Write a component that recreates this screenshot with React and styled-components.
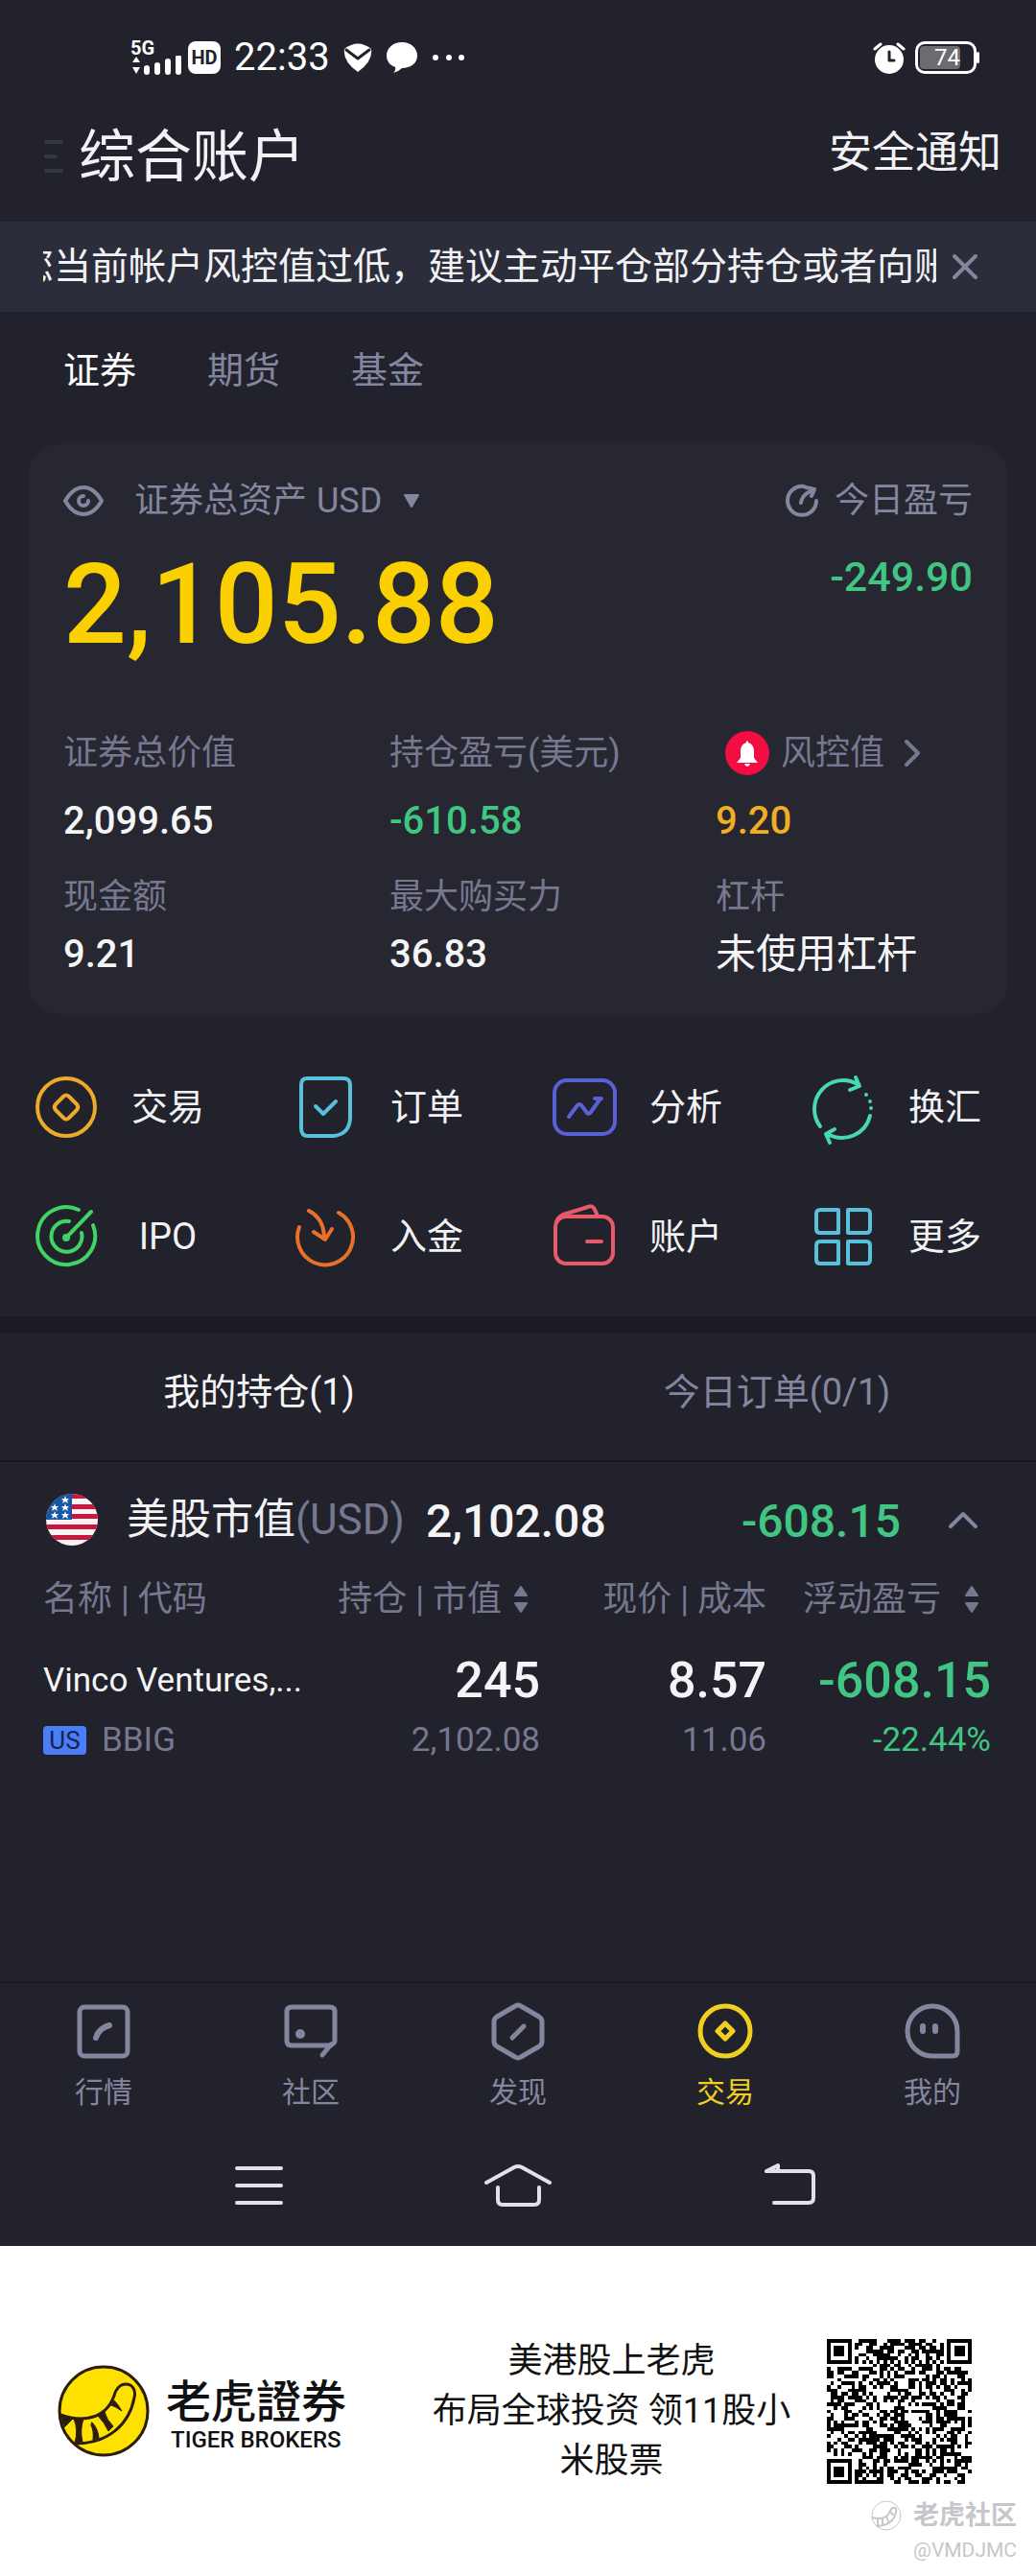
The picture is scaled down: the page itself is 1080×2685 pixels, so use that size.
import styled, { createGlobalStyle } from "styled-components";

const GlobalStyle = createGlobalStyle`
  * {
    box-sizing: border-box;
  }

  body {
    margin: 0;
    background: #ffffff;
    font-family: Roboto, "Noto Sans CJK SC", sans-serif;
  }

  button {
    padding: 0;
    border: 0;
    background: none;
    color: inherit;
    font: inherit;
    cursor: pointer;
  }

  a {
    color: inherit;
    text-decoration: none;
  }

  svg {
    display: block;
    flex: none;
    fill: none;
    stroke: currentColor;
    stroke-width: 4;
    stroke-linecap: round;
    stroke-linejoin: round;
  }
`;

const metrics = [
  { label: "证券总价值", value: "2,099.65" },
  { label: "持仓盈亏(美元)", value: "-610.58", color: "#41c583" },
  { label: "风控值", value: "9.20", color: "#f0ae24", alert: true },
  { label: "现金额", value: "9.21" },
  { label: "最大购买力", value: "36.83" },
  { label: "杠杆", value: "未使用杠杆", text: true },
];

const actions = [
  {
    name: "交易",
    color: "#eeab2a",
    icon: (
      <>
        <circle cx="32" cy="32" r="30" />
        <path d="M29.5 20.5 Q32 18.5 34.5 20.5 L43 29 Q45.5 32 43 35 L34.5 43.5 Q32 45.5 29.5 43.5 L21 35 Q18.5 32 21 29 Z" />
      </>
    ),
  },
  {
    name: "订单",
    color: "#57c0da",
    icon: (
      <>
        <path d="M13 2 H51 Q58 2 58 9 V44 Q57 60 41 62 H14 Q7 62 7 54 V9 Q7 2 13 2 Z" />
        <path d="M22 31 L30 39 L43 26" />
      </>
    ),
  },
  {
    name: "分析",
    color: "#5a61d8",
    icon: (
      <>
        <rect x="1" y="4" width="63" height="56" rx="13" />
        <path d="M16 42 L25 30 Q27 28 29 30 L35 38 Q37 40 39 37 L49 23 M43 23 H50" />
      </>
    ),
  },
  {
    name: "换汇",
    color: "#46d9ae",
    icon: (
      <>
        <path d="M8 52 A30 30 0 0 1 47 8 M45 1 L49 10 L39 14" />
        <path d="M60 41 A30 30 0 0 1 16 60 M23 55 L14 60 L18 69" />
        <path d="M56 19 v0.1 M60 26 v0.1 M61 33 v0.1" />
      </>
    ),
  },
  {
    name: "IPO",
    color: "#42d365",
    icon: (
      <>
        <path d="M45 4 A30 30 0 1 0 60 20" />
        <path d="M35 16 A16 16 0 1 0 48 28" />
        <path d="M32 33 L58 6" />
        <circle cx="32" cy="33" r="2" />
      </>
    ),
  },
  {
    name: "入金",
    color: "#e96f2a",
    icon: (
      <>
        <path d="M46 7 A29 29 0 1 1 5 22" />
        <path d="M15 5 Q31 13 31 34 M20 27 L32 35 L39 24" />
      </>
    ),
  },
  {
    name: "账户",
    color: "#e65a69",
    icon: (
      <>
        <rect x="2" y="11" width="60" height="49" rx="11" />
        <path d="M3 17 Q4 12 10 9 L36 1 Q40 -1 42 2 L46 10" />
        <path d="M35 37 H50" />
      </>
    ),
  },
  {
    name: "更多",
    color: "#57c0da",
    icon: (
      <>
        <path d="M8 4 H27 V28 H8 Q4 28 4 24 V8 Q4 4 8 4 Z" />
        <path d="M37 4 H56 Q60 4 60 8 V24 Q60 28 56 28 H37 Z" />
        <path d="M8 37 H27 V60 H8 Q4 60 4 56 V41 Q4 37 8 37 Z" />
        <path d="M37 37 H56 Q60 37 60 41 V56 Q60 60 56 60 H37 Z" />
      </>
    ),
  },
];

const menus = [
  {
    name: "行情",
    icon: (
      <>
        <rect x="3" y="3" width="50" height="51" rx="5" />
        <path d="M20 35 Q23 25 34 22" strokeWidth="6" />
      </>
    ),
  },
  {
    name: "社区",
    icon: (
      <>
        <path d="M40 53 L49 42 Q53 41 53 38 V8 Q53 3 48 3 H8 Q3 3 3 8 V38 Q3 43 8 43 H49" />
        <circle cx="17" cy="31" r="5" fill="currentColor" stroke="none" />
      </>
    ),
  },
  {
    name: "发现",
    icon: (
      <>
        <path d="M25 2 Q28 0 31 2 L50 13 Q53 15 53 18 V39 Q53 42 50 44 L31 55 Q28 57 25 55 L6 44 Q3 42 3 39 V18 Q3 15 6 13 Z" />
        <path d="M22 35 L34 23" />
      </>
    ),
  },
  {
    name: "交易",
    active: true,
    icon: (
      <>
        <circle cx="28" cy="28" r="26" />
        <path d="M28 20 L36 28 L28 36 L20 28 Z" />
      </>
    ),
  },
  {
    name: "我的",
    icon: (
      <>
        <path d="M28 2 A26 26 0 0 0 28 54 H49 Q54 54 54 49 V28 A26 26 0 0 0 28 2 Z" />
        <path d="M18 23 V28 M31 23 V28" strokeWidth="6" />
      </>
    ),
  },
];

const QR_SIZE = 41;

const isFinder = (x, y) =>
  (x < 8 && y < 8) || (x > 32 && y < 8) || (x < 8 && y > 32);

const makeQrPath = () => {
  let seed = 74;
  let path = "";
  for (let y = 0; y < QR_SIZE; y++) {
    for (let x = 0; x < QR_SIZE; x++) {
      seed = (seed * 16807) % 2147483647;
      const ring = Math.max(Math.abs(x - 34), Math.abs(y - 34));
      let on = seed % 100 < 50;
      if (x === 6 || y === 6) on = (x + y) % 2 === 0;
      if (ring < 3) on = ring !== 1;
      if (on && !isFinder(x, y)) path += `M${x} ${y}h1v1h-1z`;
    }
  }
  return path;
};

const qrPath = makeQrPath();

const TigerLogo = () => (
  <svg width="96" height="96" viewBox="0 0 96 96" role="img" aria-label="老虎證券">
    <circle cx="48" cy="48" r="46" fill="#ffe100" stroke="#2b1d0e" strokeWidth="3" />
    <g stroke="#2b1d0e" strokeWidth="3">
      <path d="M3 52 C28 61 51 55 59 32 C61 24 66 20 71 20 C78 20 82 26 80 34 C75 61 54 82 18 82" />
      <g fill="#2b1d0e" strokeWidth="1">
        <path d="M3 51 L16 56 L7 65 Z" />
        <path d="M17 56 H27 Q23 68 26 80 L18 81 Q22 68 17 56 Z" />
        <path d="M36 60 Q42 66 43 76 L37 78 Q38 68 35 63 Z" />
        <path d="M42 53 L49 49 Q51 57 58 64 L53 69 Q49 60 42 53 Z" />
        <path d="M56 42 L59 37 Q63 41 67 48 Q60 43 56 42 Z" />
      </g>
    </g>
  </svg>
);

const SortIcon = () => (
  <svg width="16" height="32" viewBox="0 0 16 32">
    <path d="M8 3 L14 12 H2 Z M8 29 L14 20 H2 Z" fill="currentColor" strokeWidth="2" />
  </svg>
);

const StatusBar = () => (
  <StatusRow>
    <Signal>
      <span>5G</span>
      <svg width="54" height="22" viewBox="0 0 54 22">
        <path d="M6 1 L10 7 H2 Z M6 19 L10 12 H2 Z" fill="currentColor" stroke="none" />
        <Bars d="M17 13 V17 M28 10 V17 M39 6 V17 M50 2 V17" />
      </svg>
    </Signal>
    <HdBadge>HD</HdBadge>
    <Clock>22:33</Clock>
    <svg width="30" height="32" viewBox="0 0 30 32">
      <path d="M1 7 Q15 -4 29 7 Q31 20 15 31 Q-1 20 1 7 Z" fill="currentColor" stroke="none" />
      <path d="M3 8 L15 17 L27 8" stroke="#21222b" strokeWidth="3" />
    </svg>
    <svg width="34" height="32" viewBox="0 0 34 32">
      <path
        d="M17 0 C26 0 33 6 33 14 C33 22 26 27 17 27 Q13 31 8 32 Q11 29 10 26 C4 24 1 19 1 14 C1 6 8 0 17 0 Z"
        fill="currentColor"
        stroke="none"
      />
    </svg>
    <svg width="36" height="8" viewBox="0 0 36 8">
      <Bars d="M4 4 v0.1 M18 4 v0.1 M31 4 v0.1" />
    </svg>
    <Spacer />
    <svg width="34" height="34" viewBox="0 0 34 34">
      <circle cx="17" cy="19" r="15" fill="currentColor" stroke="none" />
      <path d="M2 8 L8 3 M32 8 L26 3" strokeWidth="3" />
      <path d="M17 11 V20 H22" stroke="#21222b" strokeWidth="3" />
    </svg>
    <Battery>
      <span>74</span>
    </Battery>
  </StatusRow>
);

const AssetCard = () => (
  <Card>
    <Summary>
      <div>
        <LabelLine>
          <button aria-label="显示资产">
            <svg width="42" height="34" viewBox="0 0 42 34">
              <path d="M2 17 Q10 3 21 3 Q32 3 40 17 Q32 31 21 31 Q10 31 2 17 Z" />
              <path d="M21 12 A5 5 0 1 0 26 17" />
            </svg>
          </button>
          <CurrencyButton>
            证券总资产 <span>USD</span>
            <svg width="18" height="16" viewBox="0 0 18 16">
              <path d="M2 2 H16 L9 14 Z" fill="currentColor" strokeWidth="2" />
            </svg>
          </CurrencyButton>
        </LabelLine>
        <Total>2,105.88</Total>
      </div>
      <Today>
        <TodayLabel>
          <svg width="36" height="36" viewBox="0 0 36 36">
            <path d="M20 3 A15 15 0 1 0 33 18" />
            <path d="M17 20 Q18 12 27 8 M22 4 L31 6 L28 13" />
          </svg>
          今日盈亏
        </TodayLabel>
        <TodayValue>-249.90</TodayValue>
      </Today>
    </Summary>
    <MetricGrid>
      {metrics.map((item) => (
        <Metric key={item.label}>
          <MetricLabel $alert={item.alert}>
            {item.alert && (
              <svg width="46" height="46" viewBox="0 0 46 46">
                <circle cx="23" cy="23" r="23" fill="#f20d43" stroke="none" />
                <path
                  d="M23 10 Q24 10 24 12 Q30 14 30 21 V28 L34 33 H12 L16 28 V21 Q16 14 22 12 Q22 10 23 10 Z M20 34 H26 Q25 37 23 37 Q21 37 20 34 Z"
                  fill="#ffffff"
                  stroke="none"
                />
              </svg>
            )}
            {item.label}
            {item.alert && (
              <svg width="18" height="28" viewBox="0 0 18 28">
                <path d="M3 2 L15 14 L3 26" />
              </svg>
            )}
          </MetricLabel>
          <MetricValue $color={item.color} $text={item.text}>
            {item.value}
          </MetricValue>
        </Metric>
      ))}
    </MetricGrid>
  </Card>
);

const Positions = () => (
  <PositionSection>
    <MarketRow>
      <svg width="54" height="54" viewBox="0 0 54 54" role="img" aria-label="美国">
        <clipPath id="flag">
          <circle cx="27" cy="27" r="27" />
        </clipPath>
        <g clipPath="url(#flag)" stroke="none">
          <rect width="54" height="54" fill="#fdf1f3" />
          <path
            d="M0 0h54v5H0z M0 11h54v5H0z M0 21h54v5H0z M0 32h54v5H0z M0 43h54v5H0z"
            fill="#c4183c"
          />
          <rect width="27" height="27" fill="#1557a8" />
          <path
            d="M20 2l1 3h3l-2 2 1 3-3-2-3 2 1-3-2-2h3z M9 10l1 3h3l-2 2 1 3-3-2-3 2 1-3-2-2h3z M20 10l1 3h3l-2 2 1 3-3-2-3 2 1-3-2-2h3z M9 18l1 3h3l-2 2 1 3-3-2-3 2 1-3-2-2h3z M20 18l1 3h3l-2 2 1 3-3-2-3 2 1-3-2-2h3z"
            fill="#ffffff"
          />
        </g>
      </svg>
      <MarketName>
        美股市值<span>(USD)</span>
      </MarketName>
      <MarketValue>2,102.08</MarketValue>
      <Spacer />
      <MarketValue $green>-608.15</MarketValue>
      <CollapseButton aria-label="收起">
        <svg width="30" height="18" viewBox="0 0 30 18">
          <path d="M2 16 L15 3 L28 16" />
        </svg>
      </CollapseButton>
    </MarketRow>
    <Table>
      <thead>
        <tr>
          <Th>名称 | 代码</Th>
          <Th $width="236px">
            <SortButton>
              持仓 | 市值
              <SortIcon />
            </SortButton>
          </Th>
          <Th $width="236px">现价 | 成本</Th>
          <Th $width="234px">
            <SortButton $wide>
              浮动盈亏
              <SortIcon />
            </SortButton>
          </Th>
        </tr>
      </thead>
      <tbody>
        <tr>
          <Td>
            <StockName>Vinco Ventures,...</StockName>
            <Code>
              <Badge>US</Badge>BBIG
            </Code>
          </Td>
          <Td>
            <Amount>245</Amount>
            <SubAmount>2,102.08</SubAmount>
          </Td>
          <Td>
            <Amount>8.57</Amount>
            <SubAmount>11.06</SubAmount>
          </Td>
          <Td $green>
            <Amount>-608.15</Amount>
            <SubAmount>-22.44%</SubAmount>
          </Td>
        </tr>
      </tbody>
    </Table>
  </PositionSection>
);

const App = () => {
  return (
    <>
      <GlobalStyle />
      <Screen>
        <StatusBar />
        <Header>
          <MenuButton aria-label="菜单">
            <svg width="24" height="38" viewBox="0 0 24 38">
              <path d="M3 3 H19 M3 18 H13 M3 33 H19" />
            </svg>
          </MenuButton>
          <h1>综合账户</h1>
          <a href="#notice">安全通知</a>
        </Header>
        <Notice>
          <p>您当前帐户风控值过低，建议主动平仓部分持仓或者向账户</p>
          <button aria-label="关闭">
            <svg width="28" height="28" viewBox="0 0 28 28">
              <path d="M3 3 L25 25 M25 3 L3 25" />
            </svg>
          </button>
        </Notice>
        <AccountTabs>
          <AccountTab $active>证券</AccountTab>
          <AccountTab>期货</AccountTab>
          <AccountTab>基金</AccountTab>
        </AccountTabs>
        <AssetCard />
        <ActionGrid>
          {actions.map((item) => (
            <Action key={item.name} href="#action" $color={item.color}>
              <svg width="64" height="64" viewBox="0 0 64 64" overflow="visible">
                {item.icon}
              </svg>
              <span>{item.name}</span>
            </Action>
          ))}
        </ActionGrid>
        <ListTabs>
          <ListTab $active>我的持仓(1)</ListTab>
          <ListTab>今日订单(0/1)</ListTab>
        </ListTabs>
        <Positions />
        <BottomMenu>
          {menus.map((item) => (
            <MenuItem key={item.name} href="#menu" $active={item.active}>
              <svg width="56" height="56" viewBox="0 0 56 56" overflow="visible">
                {item.icon}
              </svg>
              {item.name}
            </MenuItem>
          ))}
        </BottomMenu>
        <SystemBar>
          <button aria-label="最近任务">
            <svg width="54" height="46" viewBox="0 0 54 46">
              <path d="M4 5 H50 M4 23 H50 M4 41 H50" />
            </svg>
          </button>
          <button aria-label="主页">
            <svg width="70" height="46" viewBox="0 0 70 46">
              <path d="M2 20 L31 4 Q35 2 39 4 L68 20 M14 25 V38 Q14 43 19 43 H52 Q57 43 57 38 V25" />
            </svg>
          </button>
          <button aria-label="返回">
            <svg width="82" height="46" viewBox="0 0 82 46">
              <path d="M31 8 H74 Q79 8 79 13 V36 Q79 41 74 41 H38 M30 8 L42 2 V8" />
            </svg>
          </button>
        </SystemBar>
      </Screen>
      <Footer>
        <Brand>
          <TigerLogo />
          <BrandText>
            <BrandName>老虎證券</BrandName>
            <BrandSub>TIGER BROKERS</BrandSub>
          </BrandText>
        </Brand>
        <Slogan>
          美港股上老虎
          <br />
          布局全球投资 领11股小
          <br />
          米股票
        </Slogan>
        <svg width="151" height="151" viewBox="0 0 41 41" shapeRendering="crispEdges" role="img" aria-label="二维码">
          <g fill="#000000" stroke="none">
            <path d={qrPath} />
            <path
              fillRule="evenodd"
              d="M0 0h7v7h-7z M1 1v5h5v-5z M2 2h3v3h-3z M34 0h7v7h-7z M35 1v5h5v-5z M36 2h3v3h-3z M0 34h7v7h-7z M1 35v5h5v-5z M2 36h3v3h-3z"
            />
          </g>
        </svg>
        <Watermark>
          <div>
            <svg width="32" height="32" viewBox="0 0 32 32">
              <circle cx="16" cy="16" r="15" strokeWidth="1" />
              <path
                d="M1 18 Q16 22 20 11 Q22 7 25 8 Q27 9 26 13 Q23 26 6 27 M7 19 V26 M12 19 V26 M16 17 L18 22 M20 12 L23 15"
                strokeWidth="2"
              />
            </svg>
            老虎社区
          </div>
          <small>@VMDJMC</small>
        </Watermark>
      </Footer>
    </>
  );
};

const Screen = styled.main`
  background-color: #21222b;
  color: #f2f2f5;
`;

const Spacer = styled.div`
  flex: 1;
`;

const Bars = styled.path`
  stroke-width: 6;
`;

const StatusRow = styled.div`
  display: flex;
  align-items: center;
  gap: 14px;
  height: 104px;
  padding: 16px 62px 0 136px;
  color: #ffffff;
`;

const Signal = styled.div`
  height: 36px;
  margin-right: -8px;
  font-size: 20px;
  font-weight: 700;
  line-height: 16px;
`;

const HdBadge = styled.div`
  width: 34px;
  border-radius: 8px;
  background-color: #ffffff;
  color: #21222b;
  font-size: 20px;
  font-weight: 700;
  line-height: 34px;
  text-align: center;
`;

const Clock = styled.div`
  font-size: 40px;
  line-height: 40px;
`;

const Battery = styled.div`
  position: relative;
  width: 64px;
  height: 34px;
  padding: 2px;
  border: 3px solid #ffffff;
  border-radius: 10px;
  margin-left: -4px;

  span {
    display: block;
    width: 42px;
    border-radius: 4px;
    background-color: #6b6b70;
    font-size: 24px;
    line-height: 24px;
    text-align: right;
  }

  &::after {
    content: "";
    position: absolute;
    top: 8px;
    right: -6px;
    width: 3px;
    height: 12px;
    border-radius: 2px;
    background-color: #ffffff;
  }
`;

const Header = styled.header`
  display: flex;
  align-items: center;
  height: 127px;
  padding: 0 36px 8px 45px;
  font-size: 45px;

  h1 {
    flex: 1;
    margin: 0;
    font-size: 59px;
    font-weight: 400;
    line-height: 64px;
  }

  a {
    line-height: 48px;
    padding-bottom: 8px;
  }
`;

const MenuButton = styled.button`
  width: 37px;
  color: #363745;
`;

const Notice = styled.div`
  display: flex;
  align-items: center;
  gap: 16px;
  height: 94px;
  padding: 0 60px 0 45px;
  background-color: #2c2d3a;

  p {
    flex: 1;
    margin: 0;
    overflow: hidden;
    white-space: nowrap;
    text-indent: -28px;
    font-size: 39px;
    line-height: 56px;
  }

  button {
    color: #84869f;
  }
`;

const AccountTabs = styled.nav`
  display: flex;
  gap: 74px;
  padding: 34px 66px 50px;
`;

const AccountTab = styled.button`
  color: ${({ $active }) => ($active ? "#ffffff" : "#84869f")};
  font-size: 38px;
  line-height: 54px;
`;

const Card = styled.section`
  margin: 0 30px;
  padding: 36px 0 40px;
  border-radius: 30px;
  background-color: #262731;
`;

const Summary = styled.div`
  display: flex;
  justify-content: space-between;
  padding: 0 36px;
`;

const LabelLine = styled.div`
  display: flex;
  align-items: center;
  gap: 32px;
  color: #84869f;
  font-size: 36px;
  line-height: 46px;
`;

const CurrencyButton = styled.button`
  display: flex;
  align-items: center;
  gap: 10px;

  svg {
    margin-left: 12px;
  }
`;

const Total = styled.div`
  margin-top: 27px;
  color: #fad000;
  font-size: 116px;
  font-weight: 500;
  line-height: 116px;
`;

const Today = styled.div`
  text-align: right;
`;

const TodayLabel = styled(LabelLine)`
  gap: 16px;
`;

const TodayValue = styled.div`
  margin-top: 34px;
  color: #41c583;
  font-size: 43px;
  font-weight: 500;
  line-height: 44px;
`;

const MetricGrid = styled.div`
  display: grid;
  grid-template-columns: repeat(3, 1fr);
  row-gap: 34px;
  margin-top: 74px;
`;

const Metric = styled.div`
  display: flex;
  flex-direction: column;
  gap: 26px;
  padding-left: 36px;

  &:nth-child(n + 4) {
    gap: 15px;
  }
`;

const MetricLabel = styled.div`
  display: flex;
  align-items: center;
  gap: 12px;
  padding-left: ${({ $alert }) => ($alert ? "10px" : 0)};
  color: #77788f;
  font-size: 36px;
  line-height: 46px;

  svg:last-child {
    margin-left: 8px;
  }
`;

const MetricValue = styled.div`
  color: ${({ $color }) => $color || "#f5f5f7"};
  font-size: ${({ $text }) => ($text ? "42px" : "40px")};
  font-weight: ${({ $text }) => ($text ? 400 : 500)};
  line-height: 44px;
`;

const ActionGrid = styled.nav`
  display: grid;
  grid-template-columns: repeat(4, 1fr);
  row-gap: 71px;
  padding: 65px 0 51px;
  border-bottom: 18px solid #1b1b25;
`;

const Action = styled.a`
  display: flex;
  align-items: center;
  gap: 36px;
  padding-left: 37px;
  font-size: 38px;
  line-height: 54px;

  svg {
    color: ${({ $color }) => $color};
  }

  span {
    min-width: 76px;
    text-align: center;
  }
`;

const ListTabs = styled.div`
  display: grid;
  grid-template-columns: 1fr 1fr;
  border-bottom: 2px solid #171720;
`;

const ListTab = styled.button`
  padding: 34px 0 44px;
  color: ${({ $active }) => ($active ? "#f5f5f7" : "#84869f")};
  font-size: 38px;
  line-height: 54px;
`;

const PositionSection = styled.section`
  padding: 0 47px 231px 45px;
`;

const MarketRow = styled.div`
  display: flex;
  align-items: center;
  height: 120px;
  padding: 0 14px 0 3px;
`;

const MarketName = styled.h2`
  margin: 0 22px 0 30px;
  font-size: 44px;
  font-weight: 400;
  line-height: 50px;

  span {
    color: #77788f;
  }
`;

const MarketValue = styled.div`
  padding-top: 3px;
  color: ${({ $green }) => ($green ? "#41c583" : "#f5f5f7")};
  font-size: 48px;
  font-weight: 500;
  line-height: 50px;
`;

const CollapseButton = styled.button`
  margin-left: 50px;
  color: #84869f;
`;

const Table = styled.table`
  width: 100%;
  table-layout: fixed;
  border-collapse: collapse;
`;

const Th = styled.th`
  width: ${({ $width }) => $width || "auto"};
  padding: 0;
  color: #77788f;
  font-size: 36px;
  font-weight: 400;
  line-height: 46px;
  text-align: right;
  white-space: nowrap;

  &:first-child {
    text-align: left;
  }
`;

const SortButton = styled.button`
  display: inline-flex;
  align-items: center;
  gap: ${({ $wide }) => ($wide ? "24px" : "12px")};
  margin-right: 12px;
  vertical-align: top;
`;

const Td = styled.td`
  padding: 32px 0 0;
  color: ${({ $green }) => ($green ? "#41c583" : "#f5f5f7")};
  text-align: right;
  white-space: nowrap;

  &:first-child {
    text-align: left;
  }

  &:not(:first-child) div:last-child {
    color: ${({ $green }) => ($green ? "#41c583" : "#77788f")};
  }
`;

const StockName = styled.div`
  font-size: 35px;
  line-height: 60px;
`;

const Amount = styled.div`
  font-size: 52px;
  font-weight: 500;
  line-height: 60px;
`;

const SubAmount = styled.div`
  margin-top: 12px;
  font-size: 35px;
  line-height: 40px;
`;

const Code = styled(SubAmount)`
  display: flex;
  align-items: center;
  gap: 16px;
  color: #77788f;
`;

const Badge = styled.span`
  width: 45px;
  border-radius: 4px;
  background-color: #4a7df8;
  color: #18234c;
  font-size: 26px;
  line-height: 30px;
  text-align: center;
`;

const BottomMenu = styled.nav`
  display: grid;
  grid-template-columns: repeat(5, 1fr);
  padding-top: 22px;
  border-top: 2px solid #1a1a23;
`;

const MenuItem = styled.a`
  display: flex;
  flex-direction: column;
  align-items: center;
  gap: 16px;
  color: ${({ $active }) => ($active ? "#f0cf20" : "#84869f")};
  font-size: 30px;
  line-height: 40px;

  svg {
    stroke-width: 5;
  }
`;

const SystemBar = styled.div`
  display: grid;
  grid-template-columns: repeat(3, 1fr);
  justify-items: center;
  padding: 54px 135px 40px;
  color: #e2e2e6;
`;

const Footer = styled.footer`
  position: relative;
  display: flex;
  align-items: center;
  justify-content: space-between;
  padding: 94px 67px 95px 60px;
  background-color: #ffffff;
  color: #111111;
`;

const Brand = styled.div`
  display: flex;
  align-items: center;
  gap: 17px;
`;

const BrandText = styled.div`
  padding-top: 10px;
`;

const BrandName = styled.div`
  font-family: Roboto, "Noto Sans CJK TC", sans-serif;
  font-size: 47px;
  font-weight: 500;
  line-height: 50px;
`;

const BrandSub = styled.div`
  padding: 0 5px;
  font-size: 24px;
  font-weight: 500;
  line-height: 28px;
`;

const Slogan = styled.p`
  margin: 0 0 0 52px;
  font-size: 36px;
  line-height: 52px;
  text-align: center;
`;

const Watermark = styled.div`
  position: absolute;
  right: 20px;
  bottom: 12px;
  color: #c6c6cb;
  text-align: right;

  div {
    display: flex;
    align-items: center;
    gap: 12px;
    font-size: 27px;
    font-weight: 700;
    line-height: 40px;
  }

  small {
    display: block;
    font-size: 21px;
    line-height: 32px;
  }
`;

export default App;
